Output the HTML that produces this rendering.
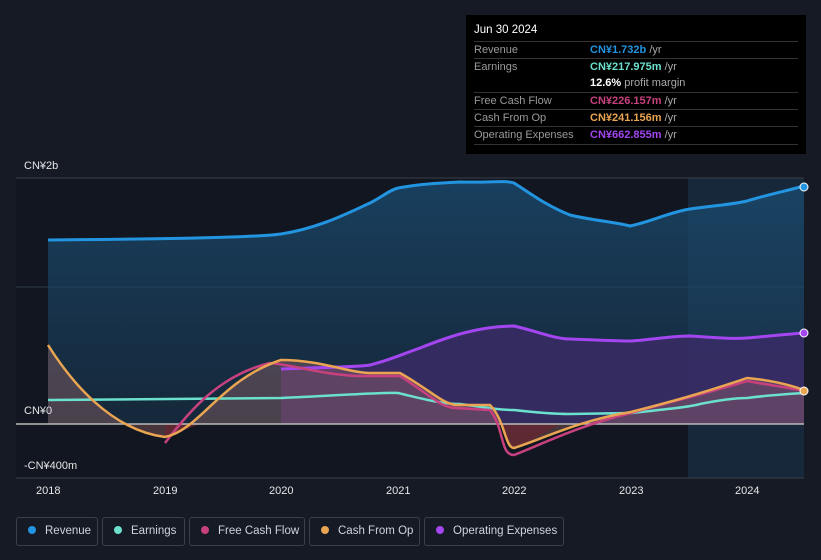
<!DOCTYPE html>
<html><head><meta charset="utf-8"><style>
body{margin:0;width:821px;height:560px;background:#151a24;font-family:"Liberation Sans","Noto Sans CJK SC",sans-serif;overflow:hidden;position:relative}
.tt{position:absolute;left:466px;top:15px;width:340px;height:139px;background:#000;color:#fff;font-size:11px}
.tt .h{position:absolute;left:8px;top:9px;font-size:11.5px}
.row{position:absolute;left:8px;width:324px;border-top:1px solid #333;height:17px;line-height:17px}
.row span.l{color:#9a9a9a;position:absolute;left:0}
.row span.v{position:absolute;left:116px;font-weight:bold}
.row span.v i{font-style:normal;font-weight:normal;color:#aaa}
.legend{position:absolute;top:517px;height:29px;border:1px solid #3a3f4a;border-radius:3px;color:#cfd3da;font-size:11.5px;line-height:27px;box-sizing:border-box;white-space:nowrap}
.legend b{display:inline-block;width:8px;height:8px;border-radius:50%;margin:0 9px 0 11px;vertical-align:0}
.ax{position:absolute;color:#e6e6e6;font-size:11px}
</style></head><body>
<svg width="821" height="560" style="position:absolute;left:0;top:0">
<defs>
<linearGradient id="rg" x1="0" y1="0" x2="0" y2="1"><stop offset="0" stop-color="#1a4a6e" stop-opacity="0.8"/><stop offset="1" stop-color="#1a3a55" stop-opacity="0.5"/></linearGradient>
</defs>
<rect x="16" y="178" width="672" height="300" fill="#111620"/>
<rect x="688" y="178" width="116" height="300" fill="#17283a"/>
<line x1="16" y1="178" x2="804" y2="178" stroke="#3a3f4a"/>
<line x1="16" y1="287" x2="804" y2="287" stroke="#2e3a48"/>
<path d="M48,240 C150,239 250,238 281,234 C320,228 350,212 370,203 C385,195 390,190 398,188 C420,184 440,183 460,182 C490,183 505,180 514,183 C530,193 545,205 570,215 C590,220 615,222 630,226 C650,222 670,212 690,209 C720,205 735,204 747,201 C770,194 790,190 804,186 L804,424 L48,424Z" fill="url(#rg)"/>
<path d="M281,369 C330,367 360,367 370,365 C390,360 400,355 420,348 C450,336 480,326 514,326 C540,332 555,339 570,339 C600,340 615,341 630,341 C650,340 670,336 690,336 C720,338 735,339 747,338 C770,336 790,334 804,333 L804,424 L281,424Z" fill="#3a2c66" fill-opacity="0.85"/>
<path d="M48,345 C70,380 110,430 165,437 C200,430 220,380 281,360 C320,360 350,373 370,373 L400,373 C430,390 440,402 455,405 L490,405 C505,420 505,448 514,448 C540,440 580,420 631,412 C670,402 700,394 747,378 C770,380 790,385 804,390 L804,424 L48,424Z" fill="#b07070" fill-opacity="0.35"/>
<path d="M165,424 L165,437 L200,424Z M500,424 L514,450 L560,424Z" fill="#6a2530" fill-opacity="0.7"/>
<line x1="16" y1="424" x2="804" y2="424" stroke="#bbb" stroke-width="1.5"/>
<line x1="16" y1="478" x2="804" y2="478" stroke="#3a3f4a"/>
<path d="M48,240 C150,239 250,238 281,234 C320,228 350,212 370,203 C385,195 390,190 398,188 C420,184 440,183 460,182 C490,183 505,180 514,183 C530,193 545,205 570,215 C590,220 615,222 630,226 C650,222 670,212 690,209 C720,205 735,204 747,201 C770,194 790,190 804,186" fill="none" stroke="#2394e0" stroke-width="3"/>
<path d="M281,369 C330,367 360,367 370,365 C390,360 400,355 420,348 C450,336 480,326 514,326 C540,332 555,339 570,339 C600,340 615,341 630,341 C650,340 670,336 690,336 C720,338 735,339 747,338 C770,336 790,334 804,333" fill="none" stroke="#a346f0" stroke-width="3"/>
<path d="M48,400 L281,398 C330,396 380,392 398,393 C420,398 440,404 460,404 C490,408 500,410 514,410 C540,413 560,414 570,414 L631,413 C660,410 690,407 700,404 C720,400 735,398 747,398 C770,395 790,394 804,393" fill="none" stroke="#6be0cc" stroke-width="2.5"/>
<path d="M165,443 C190,410 220,375 270,363 C300,366 330,377 370,376 L400,376 C430,395 440,407 455,408 L490,410 C505,430 500,455 514,455 C540,445 580,425 631,413 C670,402 700,395 747,381 C770,385 790,388 804,391" fill="none" stroke="#c8417f" stroke-width="2.5"/>
<path d="M48,345 C70,380 110,430 165,437 C200,430 220,380 281,360 C320,360 350,373 370,373 L400,373 C430,390 440,402 455,405 L490,405 C505,420 505,448 514,448 C540,440 580,420 631,412 C670,402 700,394 747,378 C770,380 790,385 804,390" fill="none" stroke="#e9a552" stroke-width="2.5"/>
<circle cx="804" cy="187" r="4" fill="#2394e0" stroke="#fff"/>
<circle cx="804" cy="333" r="4" fill="#a346f0" stroke="#fff"/>
<circle cx="804" cy="391" r="4" fill="#e9a552" stroke="#fff"/>
</svg>
<div class="ax" style="left:24px;top:160px">CN¥2b</div>
<div class="ax" style="left:24px;top:405px">CN¥0</div>
<div class="ax" style="left:24px;top:460px">-CN¥400m</div>
<div class="ax" style="left:36px;top:485px">2018</div>
<div class="ax" style="left:153px;top:485px">2019</div>
<div class="ax" style="left:269px;top:485px">2020</div>
<div class="ax" style="left:386px;top:485px">2021</div>
<div class="ax" style="left:502px;top:485px">2022</div>
<div class="ax" style="left:619px;top:485px">2023</div>
<div class="ax" style="left:735px;top:485px">2024</div>
<div class="tt">
<div class="h">Jun 30 2024</div>
<div class="row" style="top:26px"><span class="l">Revenue</span><span class="v" style="color:#2394e0">CN¥1.732b <i>/yr</i></span></div>
<div class="row" style="top:43px"><span class="l">Earnings</span><span class="v" style="color:#6be0cc">CN¥217.975m <i>/yr</i></span></div>
<div class="row" style="top:60px;border-top:none"><span class="v" style="color:#fff">12.6% <i>profit margin</i></span></div>
<div class="row" style="top:77px"><span class="l">Free Cash Flow</span><span class="v" style="color:#c8417f">CN¥226.157m <i>/yr</i></span></div>
<div class="row" style="top:94px"><span class="l">Cash From Op</span><span class="v" style="color:#e9a552">CN¥241.156m <i>/yr</i></span></div>
<div class="row" style="top:111px"><span class="l">Operating Expenses</span><span class="v" style="color:#a346f0">CN¥662.855m <i>/yr</i></span></div>
<div class="row" style="top:129px;height:0"></div>
</div>
<div class="legend" style="left:16px;width:82px"><b style="background:#2394e0"></b>Revenue</div>
<div class="legend" style="left:102px;width:83px"><b style="background:#6be0cc"></b>Earnings</div>
<div class="legend" style="left:189px;width:116px"><b style="background:#c8417f"></b>Free Cash Flow</div>
<div class="legend" style="left:309px;width:111px"><b style="background:#e9a552"></b>Cash From Op</div>
<div class="legend" style="left:424px;width:140px"><b style="background:#a346f0"></b>Operating Expenses</div>
</body></html>
